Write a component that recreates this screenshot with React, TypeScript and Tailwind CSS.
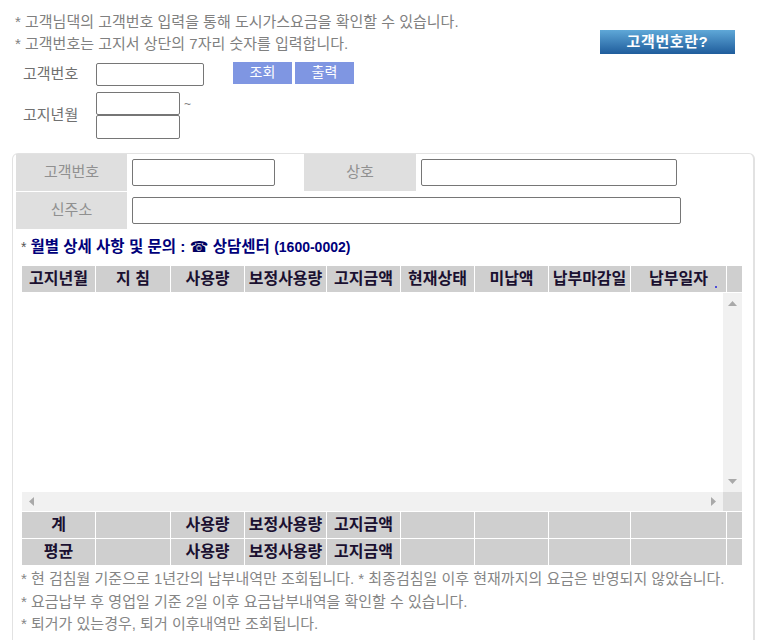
const columns = ["고지년월", "지 침", "사용량", "보정사용량", "고지금액", "현재상태", "미납액", "납부마감일", "납부일자", ""]
const totalRows = [
  ["계", "", "사용량", "보정사용량", "고지금액", "", "", "", "", ""],
  ["평균", "", "사용량", "보정사용량", "고지금액", "", "", "", "", ""],
]
const gridCols = "grid grid-cols-[73px_74px_73px_81px_73px_73px_73px_81px_95px_15px] gap-x-px"
const inputBox = "block h-[27px] rounded-[2px] border border-[#767676] bg-white"

function Row({cells}: {cells: string[]}) {
  return (
    <div className={gridCols}>
      {cells.map((c, i) => (
        <div key={i} className="flex h-[26px] items-center justify-center whitespace-nowrap bg-[#cfcfcf] text-[16px] font-bold text-[#1a1030]">
          {c}
        </div>
      ))}
    </div>
  )
}

export default function App() {
  return (
    <div className="h-[640px] w-[759px] overflow-hidden bg-white font-['Liberation_Sans','Noto_Sans_CJK_KR',sans-serif] text-[15px] text-[#808080]">
      <div className="flex pl-[15px] pt-[11px]">
        <div className="leading-[21.5px]">
          <p>* 고객님댁의 고객번호 입력을 통해 도시가스요금을 확인할 수 있습니다.</p>
          <p>* 고객번호는 고지서 상단의 7자리 숫자를 입력합니다.</p>
        </div>
        <div className="ml-auto mr-[24px] mt-[19px] flex h-[24px] w-[135px] items-center justify-center bg-gradient-to-b from-[#5fa8d8] to-[#1f5d9c] text-[15px] font-bold tracking-[0.6px] text-white">
          고객번호란?
        </div>
      </div>

      <div className="mt-[9px] flex items-start pl-[23px]">
        <span className="flex h-[23px] w-[73px] items-center text-[#707070]">고객번호</span>
        <input className="block h-[23px] w-[108px] rounded-[2px] border border-[#767676]" />
        <button className="ml-[29px] h-[22px] w-[59px] -translate-y-px bg-[#7f96e2] pb-[3px] text-[14px] text-white">조회</button>
        <button className="ml-[3px] h-[22px] w-[59px] -translate-y-px bg-[#7f96e2] pb-[3px] text-[14px] text-white">출력</button>
      </div>
      <div className="mt-[6px] flex items-center pl-[23px]">
        <span className="w-[73px] text-[#707070]">고지년월</span>
        <div>
          <input className="block h-[23px] w-[84px] rounded-[2px] border border-[#767676]" />
          <input className="block h-[24px] w-[84px] rounded-[2px] border border-[#767676]" />
        </div>
        <span className="mb-[24px] ml-[4px] text-[12px]">~</span>
      </div>

      <div className="ml-[12px] mt-[14px] h-[500px] w-[743px] rounded-t-[6px] border-l border-r-2 border-t border-[#e2e2e2] pl-[3px]">
        <div className="flex h-[37px]">
          <div className="flex w-[111px] items-center justify-center bg-[#dfdfdf] text-[#909090]">고객번호</div>
          <div className="ml-[5px] flex items-center">
            <input className={`${inputBox} w-[143px]`} />
          </div>
          <div className="ml-[29px] flex w-[112px] items-center justify-center bg-[#dfdfdf] text-[#909090]">상호</div>
          <div className="ml-[5px] flex items-center">
            <input className={`${inputBox} w-[256px]`} />
          </div>
        </div>
        <div className="mt-px flex h-[37px]">
          <div className="flex w-[111px] items-center justify-center bg-[#dfdfdf] text-[#909090]">신주소</div>
          <div className="ml-[5px] flex items-center">
            <input className={`${inputBox} w-[549px]`} />
          </div>
        </div>

        <div className="mt-[8px] flex h-[20px] items-center whitespace-pre pl-[5px] text-[15.5px] font-bold text-[#00007a]">
          <span className="mr-[4px] text-[14px] font-normal text-[#555]">*</span>
          월별 상세 사항 및 문의 : <span className="font-['DejaVu_Sans',sans-serif] text-[15px] text-[#000060]">☎</span> 상담센터 <span className="text-[14px]">(1600-0002)</span>
        </div>

        <div className="ml-[6px] mt-[9px] w-[720px]">
          <div className="relative">
            <Row cells={columns} />
            <span className="absolute left-[693px] top-[20px] h-[2px] w-[2px] rounded-full bg-[#2222dd]" />
          </div>

          <div className="mt-px flex h-[199px]">
            <div className="flex-1 bg-white" />
            <div className="flex w-[19px] flex-col items-center justify-between bg-[#f1f1f1] py-[8px]">
              <svg width="9" height="5" viewBox="0 0 9 5"><path d="M4.5 0L9 5H0z" fill="#a9a9a9" /></svg>
              <svg width="9" height="5" viewBox="0 0 9 5"><path d="M0 0h9L4.5 5z" fill="#a9a9a9" /></svg>
            </div>
          </div>
          <div className="flex h-[19px]">
            <div className="flex flex-1 items-center justify-between bg-[#f1f1f1] px-[7px]">
              <svg width="5" height="9" viewBox="0 0 5 9"><path d="M5 0v9L0 4.5z" fill="#a9a9a9" /></svg>
              <svg width="5" height="9" viewBox="0 0 5 9"><path d="M0 0l5 4.5L0 9z" fill="#a9a9a9" /></svg>
            </div>
            <div className="w-[19px] bg-[#dcdcdc]" />
          </div>

          <div className="mt-px flex flex-col gap-y-px">
            {totalRows.map((r, i) => <Row key={i} cells={r} />)}
          </div>
        </div>

        <div className="ml-[5px] mt-[3px] leading-[22.5px] text-[#858585]">
          <p>* 현 검침월 기준으로 1년간의 납부내역만 조회됩니다. * 최종검침일 이후 현재까지의 요금은 반영되지 않았습니다.</p>
          <p>* 요금납부 후 영업일 기준 2일 이후 요금납부내역을 확인할 수 있습니다.</p>
          <p>* 퇴거가 있는경우, 퇴거 이후내역만 조회됩니다.</p>
        </div>
      </div>
    </div>
  )
}
